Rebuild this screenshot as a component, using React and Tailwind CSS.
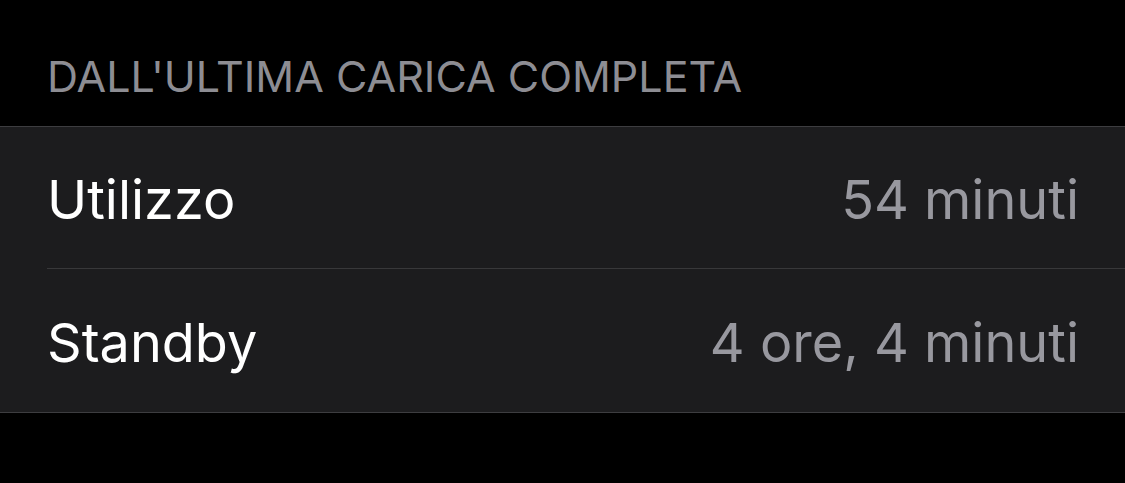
const RIGHE = [
  { etichetta: 'Utilizzo', valore: '54 minuti', altezza: 'h-[142px]' },
  { etichetta: 'Standby', valore: '4 ore, 4 minuti', altezza: 'h-[143px]' },
]

export default function App() {
  return (
    <div className="w-[1125px] h-[483px] bg-black font-['Inter',sans-serif] overflow-hidden">
      <div className="h-[126px] px-[47px] flex items-end pb-[28px]">
        <h3 className="text-[43px] leading-none text-[#8d8d93]">DALL'ULTIMA CARICA COMPLETA</h3>
      </div>
      <div className="bg-[#1c1c1e] border-y border-[#3d3d40]">
        {RIGHE.map((r, i) => (
          <div key={r.etichetta} className="pl-[47px]">
            <div className={`${r.altezza} pt-[3px] flex items-center justify-between pr-[46px] ${i < RIGHE.length - 1 ? 'border-b border-[#38383a]' : ''}`}>
              <span className="text-[54px] text-white">{r.etichetta}</span>
              <span className="text-[54px] text-[#98989f]">{r.valore}</span>
            </div>
          </div>
        ))}
      </div>
    </div>
  )
}
